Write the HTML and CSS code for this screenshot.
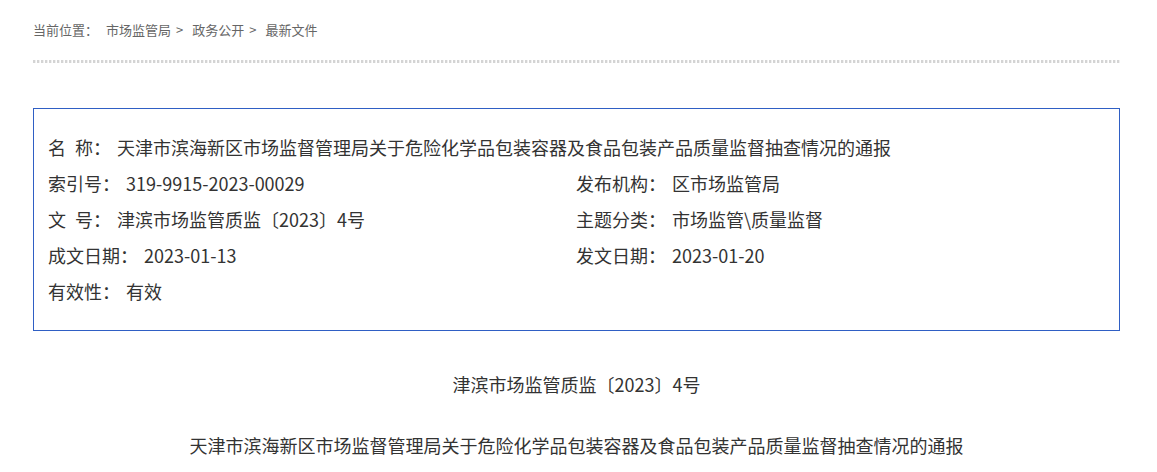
FILE: index.html
```html
<!doctype html>
<html lang="zh-CN">
 <head>
  <meta charset="UTF-8">
  <title>最新文件</title>
  <link rel="stylesheet" href="styles.css">
 </head>
 <body>
  <div class="page">
   <div class="crumb"><span class="crumb-label">当前位置：</span><a href="#">市场监管局</a><span class="sep">&gt;</span><a href="#">政务公开</a><span class="sep">&gt;</span><a href="#">最新文件</a></div>
   <div class="dots"></div>

   <div class="info">
    <div class="row full"><span class="lbl">名<i></i>称：</span>天津市滨海新区市场监督管理局关于危险化学品包装容器及食品包装产品质量监督抽查情况的通报</div>
    <div class="row"><span class="lbl">索引号：</span>319-9915-2023-00029</div>
    <div class="row"><span class="lbl">发布机构：</span>区市场监管局</div>
    <div class="row"><span class="lbl">文<i></i>号：</span>津滨市场监管质监〔2023〕4号</div>
    <div class="row"><span class="lbl">主题分类：</span>市场监管\质量监督</div>
    <div class="row"><span class="lbl">成文日期：</span>2023-01-13</div>
    <div class="row"><span class="lbl">发文日期：</span>2023-01-20</div>
    <div class="row full"><span class="lbl">有效性：</span>有效</div>
   </div>

   <p class="doc-no">津滨市场监管质监〔2023〕4号</p>
   <p class="doc-title">天津市滨海新区市场监督管理局关于危险化学品包装容器及食品包装产品质量监督抽查情况的通报</p>
  </div>
 </body>
</html>
```

FILE: styles.css
```css
body {
  margin: 0;
  background-color: #fff;
  font-family: "Noto Sans CJK SC", "Noto Sans", sans-serif;
  color: #333;
}
.page {
  width: 1087px;
  margin-left: 33px;
}
.crumb {
  padding-top: 22px;
  font-size: 13px;
  line-height: 16px;
  color: #666;
}
.crumb a {
  color: #666;
  text-decoration: none;
}
.crumb-label {
  margin-right: 8px;
}
.sep {
  margin: 0 9px 0 5px;
}
.dots {
  margin-top: 22px;
  height: 3px;
  background-image: repeating-linear-gradient(90deg, #d4d4d4 0 2px, #f0f0f0 2px 3px, transparent 3px 4px);
}
.info {
  margin-top: 45px;
  border: 1px solid #2f5fc4;
  padding: 20px 14px 21px;
  display: grid;
  grid-template-columns: 528px 1fr;
  font-size: 18px;
  line-height: 36px;
  color: #333;
}
.row.full {
  grid-column: 1 / 3;
}
.lbl {
  margin-right: 6px;
}
.lbl i {
  display: inline-block;
  width: 9px;
}
.doc-no,
.doc-title {
  margin: 0;
  text-align: center;
  font-size: 18px;
  line-height: 36px;
  color: #333;
}
.doc-no {
  margin-top: 35px;
}
.doc-title {
  margin-top: 25px;
}
```
